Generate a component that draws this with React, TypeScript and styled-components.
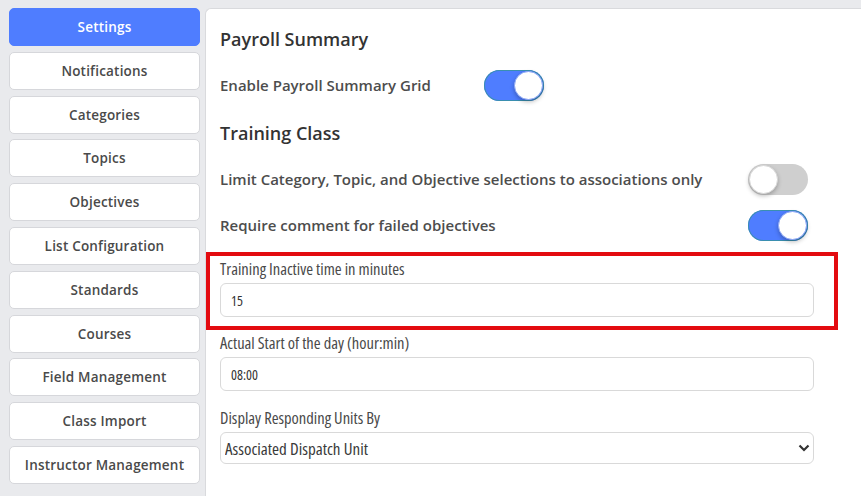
import React, { useState } from 'react';
import styled, { createGlobalStyle } from 'styled-components';

const GlobalStyle = createGlobalStyle`
    html, body {
        margin: 0;
        padding: 0;
        background: #e9eaed;
        overflow: hidden;
    }
    * {
        box-sizing: border-box;
    }
`;

const navItems = [
    'Settings',
    'Notifications',
    'Categories',
    'Topics',
    'Objectives',
    'List Configuration',
    'Standards',
    'Courses',
    'Field Management',
    'Class Import',
    'Instructor Management',
];

const Page = styled.div`
    display: flex;
    gap: 5px;
    height: 496px;
    padding: 8px 0 0 9px;
    font-family: "Open Sans", Lato, sans-serif;
`;

const Sidebar = styled.nav`
    width: 191px;
    flex-shrink: 0;
    display: flex;
    flex-direction: column;
    gap: 5.8px;
`;

const NavButton = styled.button<{ $active?: boolean }>`
    height: 38px;
    border-radius: 5px;
    border: 1px solid ${({ $active }) => ($active ? '#4f7dff' : '#d6d7db')};
    background: ${({ $active }) => ($active ? '#4f7dff' : '#ffffff')};
    color: ${({ $active }) => ($active ? '#ffffff' : '#4a4a4a')};
    font-family: inherit;
    font-size: 13.5px;
    font-weight: 600;
    letter-spacing: 0.2px;
    cursor: pointer;
`;

const Panel = styled.main`
    flex: 1;
    background: #ffffff;
    border: 1px solid #d9dadd;
    border-right: none;
    border-bottom: none;
    border-radius: 6px 0 0 0;
    padding: 17px 0 0 14px;
`;

const Heading = styled.h2<{ $top?: number }>`
    margin: ${({ $top }) => $top ?? 0}px 0 0 0;
    font-size: 18px;
    line-height: 26px;
    font-weight: 600;
    color: #333333;
`;

const ToggleRow = styled.div<{ $labelWidth: number; $top: number }>`
    display: grid;
    grid-template-columns: ${({ $labelWidth }) => $labelWidth}px 60px;
    align-items: center;
    margin-top: ${({ $top }) => $top}px;
    height: 32px;
`;

const RowLabel = styled.span`
    font-size: 15px;
    font-weight: 600;
    color: #4d4d4d;
`;

const Track = styled.button<{ $on: boolean }>`
    position: relative;
    width: 60px;
    height: 31px;
    padding: 0;
    border: none;
    border-radius: 16px;
    background: ${({ $on }) => ($on ? '#4f7dff' : '#cfcfcf')};
    box-shadow: ${({ $on }) => ($on ? 'inset 0 0 0 1px #3a8fb0' : 'none')};
    cursor: pointer;
`;

const Knob = styled.span<{ $on: boolean }>`
    position: absolute;
    top: 1px;
    left: ${({ $on }) => ($on ? '30px' : '1px')};
    width: 29px;
    height: 29px;
    border-radius: 50%;
    background: #ffffff;
    border: 1px solid ${({ $on }) => ($on ? '#8aa6f5' : '#d8d8d8')};
    box-shadow: 0 2px 4px rgba(0, 0, 0, 0.25);
`;

const Highlight = styled.div`
    margin: 11px 0 0 -14px;
    width: 632px;
    border: 4px solid #e30b10;
    padding: 3px 20px 9px 10px;
`;

const Field = styled.div<{ $top?: number }>`
    display: flex;
    flex-direction: column;
    gap: 4px;
    width: 594px;
    margin-top: ${({ $top }) => $top ?? 0}px;
`;

const FieldLabel = styled.label`
    font-family: "Liberation Sans Narrow", "Open Sans", sans-serif;
    font-stretch: condensed;
    font-size: 16.5px;
    line-height: 20px;
    color: #4a4a4a;
`;

const TextInput = styled.input`
    height: 34px;
    width: 100%;
    border: 1px solid #d9d9d9;
    border-radius: 6px;
    padding: 0 10px;
    font-family: "Liberation Sans Narrow", "Open Sans", sans-serif;
    font-stretch: condensed;
    font-size: 14px;
    color: #333333;
    outline: none;
`;

const SelectWrap = styled.div`
    position: relative;
    width: 100%;
`;

const Select = styled.select`
    appearance: none;
    height: 32px;
    width: 100%;
    border: 1px solid #d9d9d9;
    border-radius: 6px;
    padding: 0 30px 0 4px;
    background: #ffffff;
    font-family: "Liberation Sans Narrow", "Open Sans", sans-serif;
    font-stretch: condensed;
    font-size: 17px;
    font-weight: 400;
    color: #3a3a3a;
    outline: none;
`;

const Chevron = styled.svg`
    position: absolute;
    right: 4px;
    top: 12px;
    pointer-events: none;
`;

type ToggleProps = { on: boolean; onToggle: () => void };

const Toggle: React.FC<ToggleProps> = ({ on, onToggle }) => (
    <Track $on={on} onClick={onToggle} aria-pressed={on}>
        <Knob $on={on} />
    </Track>
);

const App: React.FC = () => {
    const [payrollGrid, setPayrollGrid] = useState(true);
    const [limitAssoc, setLimitAssoc] = useState(false);
    const [requireComment, setRequireComment] = useState(true);
    const [inactive, setInactive] = useState('15');
    const [startDay, setStartDay] = useState('08:00');
    const [units, setUnits] = useState('associated');

    return (
        <>
            <GlobalStyle />
            <Page>
                <Sidebar>
                    {navItems.map((item) => (
                        <NavButton key={item} $active={item === 'Settings'}>
                            {item}
                        </NavButton>
                    ))}
                </Sidebar>
                <Panel>
                    <Heading>Payroll Summary</Heading>
                    <ToggleRow $labelWidth={264} $top={17}>
                        <RowLabel>Enable Payroll Summary Grid</RowLabel>
                        <Toggle on={payrollGrid} onToggle={() => setPayrollGrid(!payrollGrid)} />
                    </ToggleRow>

                    <Heading $top={19}>Training Class</Heading>
                    <ToggleRow $labelWidth={528} $top={17}>
                        <RowLabel>Limit Category, Topic, and Objective selections to associations only</RowLabel>
                        <Toggle on={limitAssoc} onToggle={() => setLimitAssoc(!limitAssoc)} />
                    </ToggleRow>
                    <ToggleRow $labelWidth={528} $top={14}>
                        <RowLabel>Require comment for failed objectives</RowLabel>
                        <Toggle on={requireComment} onToggle={() => setRequireComment(!requireComment)} />
                    </ToggleRow>

                    <Highlight>
                        <Field>
                            <FieldLabel>Training Inactive time in minutes</FieldLabel>
                            <TextInput value={inactive} onChange={(e) => setInactive(e.target.value)} />
                        </Field>
                    </Highlight>

                    <Field $top={3}>
                        <FieldLabel>Actual Start of the day (hour:min)</FieldLabel>
                        <TextInput value={startDay} onChange={(e) => setStartDay(e.target.value)} />
                    </Field>

                    <Field $top={17}>
                        <FieldLabel>Display Responding Units By</FieldLabel>
                        <SelectWrap>
                            <Select value={units} onChange={(e) => setUnits(e.target.value)}>
                                <option value="associated">Associated Dispatch Unit</option>
                                <option value="assigned">Assigned Unit</option>
                            </Select>
                            <Chevron width="12" height="8" viewBox="0 0 12 8">
                                <path d="M1.5 1.5 L6 6 L10.5 1.5" fill="none" stroke="#333" strokeWidth="2.2" />
                            </Chevron>
                        </SelectWrap>
                    </Field>
                </Panel>
            </Page>
        </>
    );
};

export default App;
